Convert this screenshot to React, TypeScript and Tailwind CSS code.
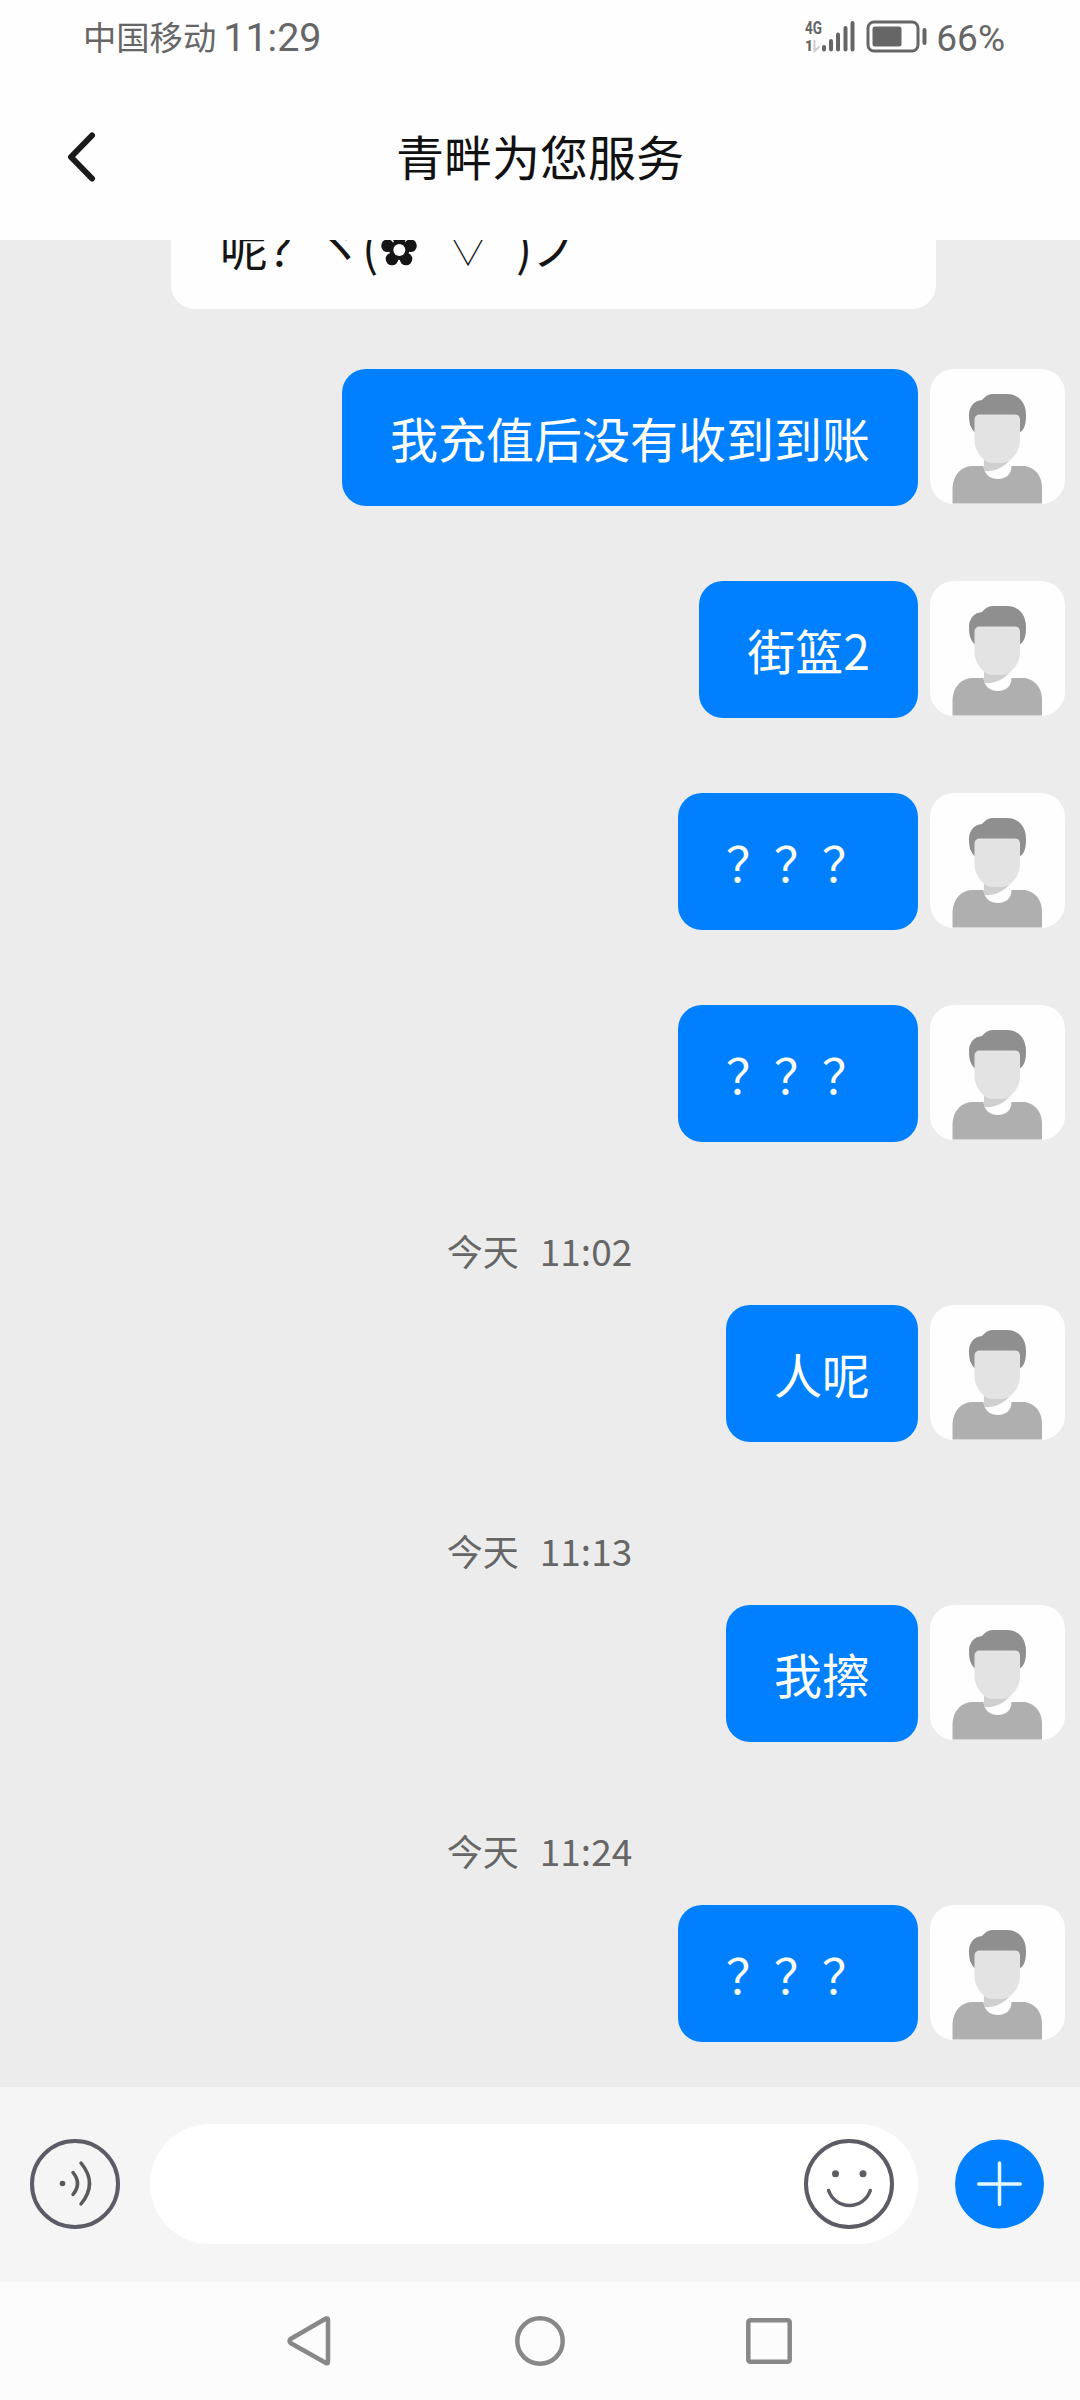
import React from "react";

interface Message {
  text: string;
  time?: string;
}

const messages: Message[] = [
  { text: "我充值后没有收到到账" },
  { text: "街篮2" },
  { text: "？？？" },
  { text: "？？？" },
  { text: "人呢", time: "11:02" },
  { text: "我擦", time: "11:13" },
  { text: "？？？", time: "11:24" },
];

const StatusBar: React.FC = () => (
  <div className="flex h-[75px] items-center justify-between pl-[83px] pr-[75px] text-[#666]">
    <div className="flex items-center">
      <span className="mb-[3px] text-[33.300px] leading-[72px]">中国移动</span>
      <span className="ml-[7px] font-['Roboto'] text-[39.500px] leading-[75px]">11:29</span>
    </div>
    <div className="flex items-center">
      <svg width="124" height="75" viewBox="0 0 124 75" fill="#666">
        <text x="1" y="34" fontFamily="Roboto" fontWeight="700" fontSize="18" textLength="17" lengthAdjust="spacingAndGlyphs">4G</text>
        <text x="1" y="51" fontFamily="Roboto" fontWeight="900" fontSize="14" textLength="8" lengthAdjust="spacingAndGlyphs">1</text>
        <path d="M10.500 40v11l5-4.500" fill="none" stroke="#ccc" strokeWidth="2" />
        <rect x="18" y="45" width="4" height="6.500" rx="2" />
        <rect x="25" y="39" width="4" height="12.500" rx="2" />
        <rect x="32" y="32.500" width="4" height="19" rx="2" />
        <rect x="39.500" y="26" width="4" height="25.500" rx="2" />
        <rect x="46.500" y="21" width="4" height="30.500" rx="2" />
        <rect x="64" y="22" width="50" height="29" rx="6" fill="none" stroke="#666" strokeWidth="3" />
        <rect x="68.500" y="26.500" width="29" height="20" rx="2.500" />
        <rect x="118.500" y="28" width="4" height="17" rx="2" />
      </svg>
      <span className="ml-[8px] mt-[2px] font-['Roboto'] text-[37px] leading-[75px]">66%</span>
    </div>
  </div>
);

const Header: React.FC = () => (
  <div className="grid h-[165px] grid-cols-[1fr_auto_1fr] items-center">
    <svg className="mb-[2px] ml-[63px]" width="36" height="50" viewBox="0 0 36 50" fill="none" stroke="#1a1a1a" strokeWidth="6" strokeLinecap="round" strokeLinejoin="round">
      <path d="M29 3.500L8 25l21 21.500" />
    </svg>
    <h1 className="mb-[4px] text-[48px] leading-[161px] text-[#111]">青畔为您服务</h1>
  </div>
);

const Flower: React.FC = () => (
  <svg className="shrink-0" width="41" height="76" viewBox="0 0 41 76" fill="#151515">
    <circle cx="20.300" cy="31" r="6.500" />
    <circle cx="8.500" cy="38.700" r="6.300" />
    <circle cx="31.500" cy="38.700" r="6.300" />
    <circle cx="13" cy="52" r="6.300" />
    <circle cx="27" cy="52" r="6.300" />
    <circle cx="20.300" cy="43" r="10" />
    <circle cx="20.300" cy="43" r="6" fill="#fefefe" />
  </svg>
);

const Avatar: React.FC = () => (
  <div className="size-[135px] shrink-0 overflow-hidden rounded-[24px] bg-[#fefefe]">
    <svg width="135" height="135" viewBox="0 0 135 135">
      <path d="M22.500 134.500V119C23 105 32 97 43 97H92C103 97 112 105 112 119V134.500Z" fill="#afafaf" />
      <path d="M53.500 94V98C55 106 60 110 68 110C76 110 81.500 105 81.500 97V92Z" fill="#fefefe" />
      <path d="M54 90V102C65 103 74 98 80 91Z" fill="#cfcfcf" />
      <path d="M45 63.500C40 59 39 53 39 46C39 37 45 31.500 52 31C56 26.500 59 25 64 25H77C89 25 96 34 96 46C96 54 95 60 90 63.500Z" fill="#8f8f8f" />
      <path d="M44.500 51Q44.500 45.500 50 45.500H84.500Q90 45.500 90 51V72C90 84 79 94 72 94H62C54 94 44.500 82 44.500 72Z" fill="#e3e3e3" />
    </svg>
  </div>
);

const MessageRow: React.FC<{ message: Message }> = ({ message }) => (
  <>
    {message.time && (
      <div className="mb-[18px] mt-[-4px] flex h-[74px] items-center justify-center gap-[21px] pr-[1px] text-[36px] leading-[74px] text-[#666]">
        <span>今天</span>
        <span className="text-[37px]">{message.time}</span>
      </div>
    )}
    <div className="mb-[75px] flex items-start justify-end gap-[12px] pr-[15px]">
      <div className="h-[137px] rounded-[24px] bg-[#0080ff] px-[48px] text-[48px] leading-[136px] text-white">
        {message.text}
      </div>
      <Avatar />
    </div>
  </>
);

const InputBar: React.FC = () => (
  <div className="flex h-[195px] items-center bg-[#f5f5f5] pb-[1px] pl-[30px] pr-[36px]">
    <svg width="90" height="90" viewBox="0 0 90 90" fill="none" stroke="#5c5c66" strokeWidth="4" strokeLinecap="round">
      <circle cx="45" cy="45" r="43" />
      <circle cx="32.500" cy="44.500" r="2.800" fill="#5a5a5a" stroke="none" />
      <path d="M43 33.500Q52 44.500 43 55.500M51 24Q68 44.500 51 65" stroke="#5a5a5a" strokeWidth="3.500" />
    </svg>
    <div className="ml-[30px] flex h-[120px] w-[768px] items-center justify-end rounded-full bg-white pr-[24px]">
      <svg width="90" height="90" viewBox="0 0 90 90" fill="none" stroke="#5c5c66" strokeWidth="4" strokeLinecap="round">
        <circle cx="45" cy="45" r="43" />
        <circle cx="31.500" cy="34.700" r="3.500" fill="#5c5c62" stroke="none" />
        <circle cx="59" cy="34.700" r="3.500" fill="#5c5c62" stroke="none" />
        <path d="M24.600 51.500A22 22 0 0 0 66.300 51.500" strokeWidth="3.500" />
      </svg>
    </div>
    <svg className="ml-auto" width="89" height="90" viewBox="0 0 89 90">
      <circle cx="44.500" cy="45" r="44.500" fill="#0080ff" />
      <path d="M23.700 45H65.300M44.500 24V65.500" stroke="#e6f8ff" strokeWidth="3.500" strokeLinecap="round" />
    </svg>
  </div>
);

const NavBar: React.FC = () => (
  <div className="h-[118px] bg-[#fcfcfc]">
    <svg width="1080" height="118" viewBox="0 0 1080 118" fill="none" stroke="#888" strokeWidth="4.500" strokeLinejoin="round">
      <path d="M326 36.500Q328 36 328 38V79.500Q328 82 326 81L290.500 61Q288.500 59 290.500 57Z" />
      <circle cx="540" cy="59" r="22.700" />
      <rect x="748.300" y="38.300" width="41.400" height="41.400" rx="2" />
    </svg>
  </div>
);

const App: React.FC = () => {
  return (
    <div className="flex h-[2400px] w-[1080px] flex-col overflow-hidden bg-[#fefefe] font-['Noto_Sans_CJK_SC',sans-serif]">
      <StatusBar />
      <Header />

      {/* Conversation, scrolled so that only the end of the greeting shows */}
      <div className="h-[1847px] overflow-hidden bg-[#ececec]">
        <div className="mb-[60px] ml-[171px] flex h-[69px] w-[765px] items-end rounded-b-[24px] bg-[#fefefe] pb-[26px] pl-[49px] text-[48px] leading-[76px] text-[#151515]">
          <span className="w-[48px]">呢</span>
          <span className="w-[48px]">？</span>
          <span className="mb-[1px] w-[46px]">ヾ</span>
          <span className="w-[17px]">(</span>
          <Flower />
          <span className="mb-[8px] w-[24px]">ﾟ</span>
          <span className="flex w-[48px] justify-center text-[42px] font-thin">▽</span>
          <span className="mb-[8px] w-[24px]">ﾟ</span>
          <span className="w-[16px]">)</span>
          <span className="w-[48px]">ノ</span>
        </div>
        {messages.map((message, i) => (
          <MessageRow key={i} message={message} />
        ))}
      </div>

      <InputBar />
      <NavBar />
    </div>
  );
};

export default App;
